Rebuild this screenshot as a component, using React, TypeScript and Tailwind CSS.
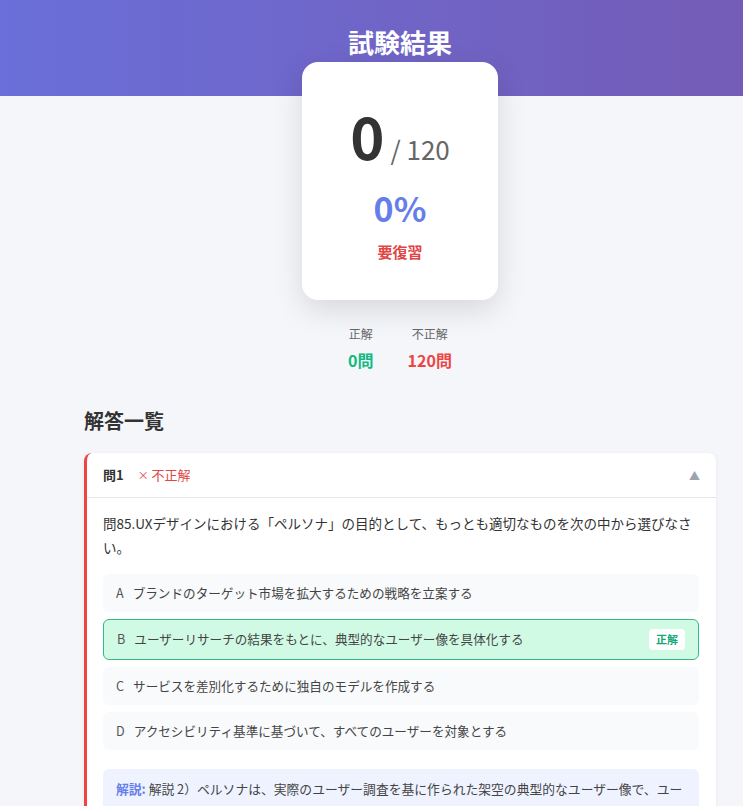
const FONT = { fontFamily: '"Noto Sans CJK JP", "Noto Sans", sans-serif' };

type Choice = { key: string; text: string; correct?: boolean };

const choices: Choice[] = [
  { key: "A", text: "ブランドのターゲット市場を拡大するための戦略を立案する" },
  { key: "B", text: "ユーザーリサーチの結果をもとに、典型的なユーザー像を具体化する", correct: true },
  { key: "C", text: "サービスを差別化するために独自のモデルを作成する" },
  { key: "D", text: "アクセシビリティ基準に基づいて、すべてのユーザーを対象とする" },
];

function ChoiceRow({ c }: { c: Choice }) {
  return (
    <div
      className={`flex items-center justify-between rounded-md px-[13px] text-[12.6px] text-[#444] ${
        c.correct ? "bg-[#d1fae5] border border-[#34b98a] h-[41px]" : "bg-[#f8fafc] h-[38px]"
      }`}
    >
      <div className="flex items-center gap-[9px]">
        <span className="text-[#555]">{c.key}</span>
        <span>{c.text}</span>
      </div>
      {c.correct && (
        <span className="bg-white text-[#10a877] font-bold text-[11px] rounded px-[7px] py-[2px]">正解</span>
      )}
    </div>
  );
}

export default function App() {
  return (
    <div className="w-full min-h-screen overflow-hidden bg-[#f4f6fa]" style={FONT}>
      <div className="w-[800px]">
        <header className="h-[96px] bg-gradient-to-r from-[#6a6fd9] to-[#745ab4] pt-[24px]">
          <h1 className="text-center text-white font-bold text-[26px] leading-[36px]">試験結果</h1>
        </header>

        <div className="flex justify-center -mt-[34px]">
          <div className="w-[196px] h-[238px] bg-white rounded-2xl shadow-[0_10px_30px_rgba(0,0,0,0.12)] flex flex-col items-center pt-[41px]">
            <div className="flex items-baseline leading-[64px]">
              <span className="text-[58px] font-bold text-[#333]">0</span>
              <span className="text-[26px] text-[#666] ml-[6px]">/ 120</span>
            </div>
            <div className="mt-[7px] text-[34px] leading-[40px] font-bold text-[#667eea]">0%</div>
            <div className="mt-[13px] text-[15px] leading-[22px] font-bold text-[#e04444]">要復習</div>
          </div>
        </div>

        <div className="flex justify-center gap-[34px] mt-[26px]">
          <div className="flex flex-col items-center">
            <span className="text-[12px] leading-[16px] text-[#666]">正解</span>
            <span className="mt-[8px] text-[16px] leading-[20px] font-bold text-[#10b981]">0問</span>
          </div>
          <div className="flex flex-col items-center">
            <span className="text-[12px] leading-[16px] text-[#666]">不正解</span>
            <span className="mt-[8px] text-[16px] leading-[20px] font-bold text-[#ef4444]">120問</span>
          </div>
        </div>

        <div className="px-[84px] mt-[37px]">
          <h2 className="text-[20px] leading-[28px] font-bold text-[#333]">解答一覧</h2>

          <div className="mt-[18px] bg-white rounded-lg border-l-[3px] border-[#ef4444] shadow-[0_1px_4px_rgba(0,0,0,0.06)]">
            <div className="h-[45px] flex items-center justify-between pl-[16px] pr-[16px] border-b border-[#e5e7eb]">
              <div className="flex items-center gap-[14px] text-[13px]">
                <span className="font-bold text-[#333]">問1</span>
                <span className="text-[#e04444]">
                  <span className="text-[11px]">×</span> 不正解
                </span>
              </div>
              <span className="text-[11px] text-[#9ca3af]">▲</span>
            </div>

            <div className="pl-[16px] pr-[17px] pt-[13px] pb-[16px]">
              <p className="text-[13.5px] leading-[24px] text-[#333]">
                問85.UXデザインにおける「ペルソナ」の目的として、もっとも適切なものを次の中から選びなさい。
              </p>
              <div className="mt-[15px] flex flex-col gap-[7px]">
                {choices.map((c) => (
                  <ChoiceRow key={c.key} c={c} />
                ))}
              </div>
              <div className="mt-[19px] bg-[#eff3ff] rounded-md px-[13px] py-[8px] text-[12.8px] leading-[24px] text-[#444]">
                <span className="font-bold text-[#667eea]">解説:</span> 解説 2）ペルソナは、実際のユーザー調査を基に作られた架空の典型的なユーザー像で、ユーザーのニーズや行動を理解し、設計の判断基準とするために用いられます。
              </div>
            </div>
          </div>
        </div>
      </div>
    </div>
  );
}
